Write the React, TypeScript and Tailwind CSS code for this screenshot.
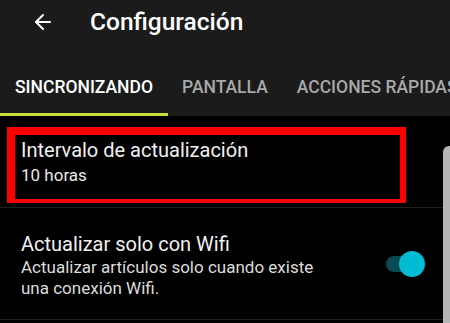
import { ArrowLeft } from "lucide-react"

const tabs = ["SINCRONIZANDO", "PANTALLA", "ACCIONES RÁPIDAS"]

export default function App() {
    return (
        <div className="relative w-[450px] h-[323px] overflow-hidden bg-black text-white font-['Roboto',sans-serif]">
            <div className="bg-[#1b1b1b]">
                <div className="flex items-center h-[44px]">
                    <ArrowLeft size={24} strokeWidth={2} className="ml-[31px] text-white" />
                    <h1 className="ml-[35px] text-[24.5px] font-medium">Configuración</h1>
                </div>
                <div className="flex h-[72px] pt-[28px] whitespace-nowrap">
                    {tabs.map((t, i) => (
                        <div
                            key={t}
                            className={
                                i === 0
                                    ? "pl-[15px] pr-[15px] h-full flex flex-col justify-between text-white"
                                    : "pl-[14px] pr-[15px] h-full flex flex-col justify-between text-[#a8a8a8]"
                            }
                        >
                            <span className="text-[17.5px] font-medium leading-[30px]">{t}</span>
                            <div className={i === 0 ? "h-[3px] -ml-[15px] -mr-[15px] bg-[#c8dc3c]" : "h-[3px]"} />
                        </div>
                    ))}
                </div>
            </div>

            <div className="pt-[11px] border-b border-[#1e1e1e] pb-[4px]">
                <div className="ml-[7px] w-[399px] h-[76px] border-[#ff0000] border-t-[8px] border-l-[8px] border-r-[6px] border-b-[4px] pl-[6px] pt-[3px]">
                    <div className="text-[20px] leading-[25px] text-[#f0f0f0]">Intervalo de actualización</div>
                    <div className="text-[17px] leading-[25px] text-[#e8e8e8]">10 horas</div>
                </div>
            </div>

            <div className="flex items-center border-b border-[#1e1e1e] h-[112px] pl-[21px] pr-[25px]">
                <div className="flex-1 pt-[4px]">
                    <div className="text-[20px] leading-[25px] text-[#f0f0f0]">Actualizar solo con Wifi</div>
                    <div className="text-[17px] leading-[21px] text-[#dcdcdc] w-[320px]">
                        Actualizar artículos solo cuando existe una conexión Wifi.
                    </div>
                </div>
                <div className="relative w-[39px] h-[26px] flex items-center">
                    <div className="w-[34px] h-[16px] rounded-full bg-[#0b4a52]" />
                    <div className="absolute right-0 top-0 w-[26px] h-[26px] rounded-full bg-[#00bcd4]" />
                </div>
            </div>

            <div className="absolute right-0 top-[146px] w-[7px] h-[200px] rounded-tl-[6px] bg-[#b5b5b5]" />
        </div>
    )
}
